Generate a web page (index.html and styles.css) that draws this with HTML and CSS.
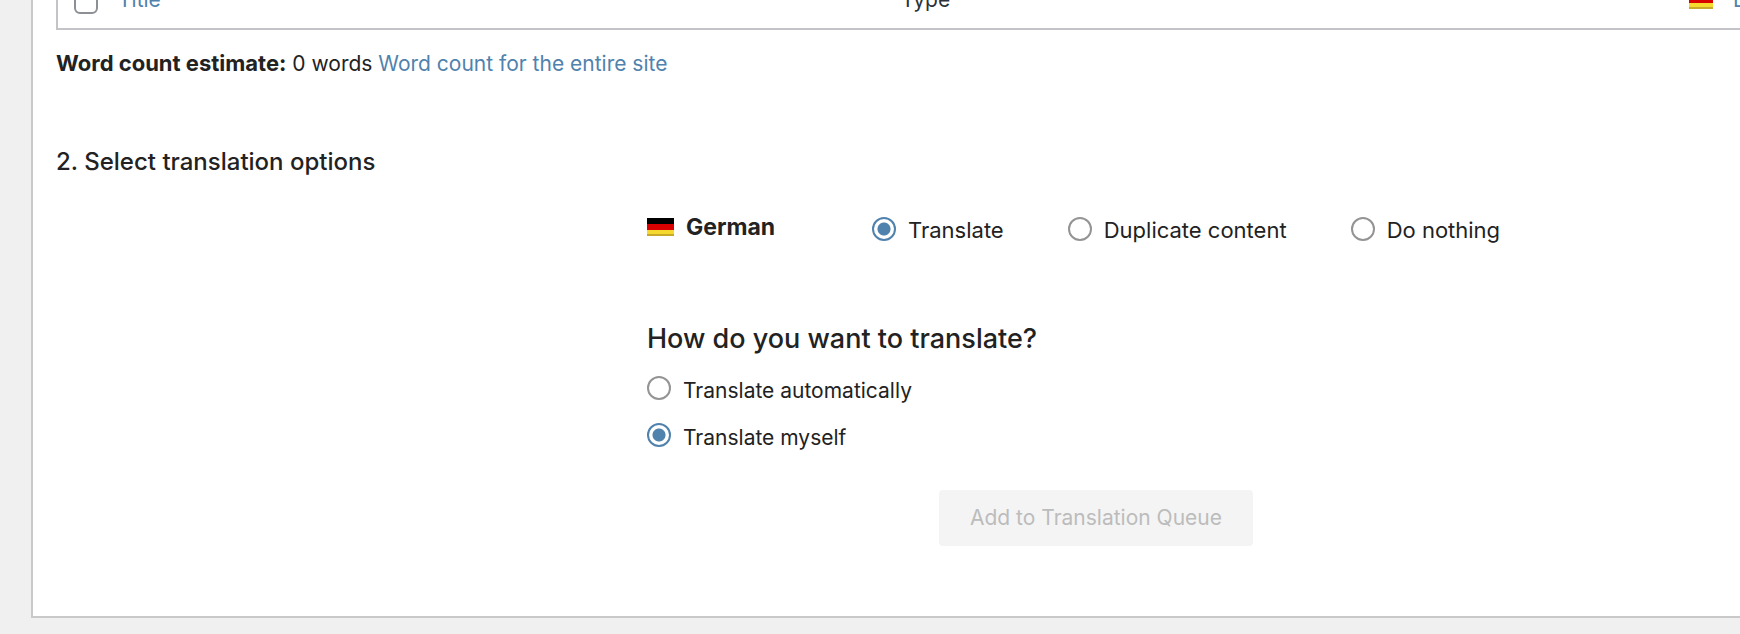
FILE: index.html
```html
<!DOCTYPE html>
<html lang="en">
<head>
    <meta charset="UTF-8">
    <meta name="viewport" content="width=device-width, initial-scale=1.0">
    <title>Translation Dashboard</title>
    <link rel="stylesheet" href="styles.css">
</head>
<body>
    <main class="panel">
        <table class="items-table">
            <tfoot>
                <tr>
                    <td class="col-check"><input type="checkbox" class="checkbox" aria-label="Select all"></td>
                    <th class="col-title" scope="col"><a href="#">Title</a></th>
                    <th class="col-type" scope="col">Type</th>
                    <th class="col-flag" scope="col">
                        <svg class="flag flag-small" viewBox="0 0 27 18" preserveAspectRatio="none" role="img" aria-label="German">
                            <rect width="27" height="6" fill="#000"/>
                            <rect y="6" width="27" height="6" fill="#d90000"/>
                            <rect y="12" width="27" height="4" fill="#f5d92e"/>
                            <rect y="16" width="27" height="2" fill="#c9a928"/>
                        </svg>
                    </th>
                    <th class="col-date" scope="col"><a href="#">Date</a></th>
                </tr>
            </tfoot>
        </table>

        <p class="word-count"><strong>Word count estimate:</strong> 0 words <a href="#">Word count for the entire site</a></p>

        <h2 class="section-title">2. Select translation options</h2>

        <form class="options">
            <div class="language-row">
                <div class="language">
                    <svg class="flag" viewBox="0 0 27 18" aria-hidden="true">
                        <rect width="27" height="6" fill="#000"/>
                        <rect y="6" width="27" height="6" fill="#d90000"/>
                        <rect y="12" width="27" height="4" fill="#f5d92e"/>
                        <rect y="16" width="27" height="2" fill="#c9a928"/>
                    </svg>
                    <strong>German</strong>
                </div>
                <label class="choice"><input type="radio" class="radio" name="action" value="translate" checked> <span>Translate</span></label>
                <label class="choice"><input type="radio" class="radio" name="action" value="duplicate"> <span>Duplicate content</span></label>
                <label class="choice"><input type="radio" class="radio" name="action" value="nothing"> <span>Do nothing</span></label>
            </div>

            <h3 class="question">How do you want to translate?</h3>
            <div class="methods">
                <label class="method"><input type="radio" class="radio" name="method" value="auto"> <span>Translate automatically</span></label>
                <label class="method"><input type="radio" class="radio" name="method" value="myself" checked> <span>Translate myself</span></label>
            </div>

            <button type="submit" class="submit" disabled>Add to Translation Queue</button>
        </form>
    </main>
</body>
</html>
```

FILE: styles.css
```css
body {
    margin: 0;
    background: #f0f0f0;
    color: #222;
    font-family: Inter, "Liberation Sans", sans-serif;
    font-size: 21px;
    line-height: 28px;
    overflow: hidden;
}

a {
    color: #4f82ad;
    text-decoration: none;
}

/* The panel starts above the fold and runs past the right edge */
.panel {
    margin: -28px -90px 16px 31px;
    padding: 0 22px 70px 23px;
    background: #fff;
    border: 2px solid #c9c9c9;
}

.items-table {
    width: 100%;
    height: 56px;
    table-layout: fixed;
    border: 2px solid #c3c4c7;
    border-collapse: separate;
    border-spacing: 0;
}

.items-table td, .items-table th {
    padding: 0;
    text-align: left;
    font-weight: 400;
    vertical-align: middle;
}

.items-table th {
    padding-bottom: 4px;
}

.items-table .col-check {
    width: 44px;
    padding-left: 16px;
}

.col-type {
    width: 788px;
}

.items-table .col-type {
    color: #2c3338;
}

.col-flag {
    width: 44px;
}

.col-date {
    width: 71px;
}

.checkbox {
    appearance: none;
    display: block;
    box-sizing: border-box;
    width: 24px;
    height: 24px;
    margin: 0;
    border: 2px solid #8c8f94;
    border-radius: 6px;
    background: #fff;
}

.flag {
    display: block;
    width: 27px;
    height: 18px;
}

.flag-small {
    width: 24px;
}

.word-count {
    margin: 19px 0 0;
}

.word-count strong {
    font-size: 22px;
}

.section-title {
    margin: 68px 0 0;
    font-size: 24px;
    line-height: 32px;
    font-weight: 500;
}

.options {
    padding-left: 591px;
}

.language-row {
    display: flex;
    align-items: flex-start;
    margin-top: 36px;
    font-size: 22px;
}

.language {
    display: flex;
    align-items: center;
    gap: 12px;
    width: 225px;
    height: 26px;
    font-size: 23px;
}

.choice {
    display: flex;
    gap: 12px;
    margin-right: 64px;
    padding-top: 3px;
    line-height: 26px;
}

.radio {
    appearance: none;
    flex: none;
    box-sizing: border-box;
    width: 24px;
    height: 24px;
    margin: 0;
    border: 2px solid #949494;
    border-radius: 50%;
    background: #fff;
}

.radio:checked {
    border-color: #4f82ad;
    background: radial-gradient(circle, #4f82ad 6px, #fff 7px);
}

.question {
    margin: 78px 0 0;
    font-size: 27px;
    line-height: 36px;
    font-weight: 500;
}

.methods {
    display: flex;
    flex-direction: column;
    gap: 17px;
    margin-top: 19px;
}

.method {
    display: flex;
    gap: 12px;
    line-height: 30px;
}

.submit {
    display: block;
    height: 56px;
    margin: 37px 0 0 292px;
    padding: 0 31px;
    border: 0;
    border-radius: 4px;
    background: #f4f4f4;
    color: #bcbcbc;
    font: inherit;
}
```
